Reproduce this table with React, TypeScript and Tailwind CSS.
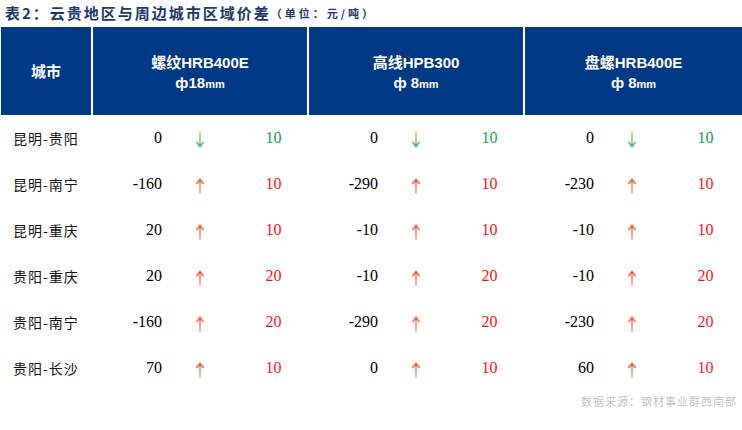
import React from 'react';

// Header groups
const groups = [
  { name: '螺纹HRB400E', spec: 'ф18' },
  { name: '高线HPB300', spec: 'ф 8' },
  { name: '盘螺HRB400E', spec: 'ф 8' },
];

type Cell = { price: string; up: boolean; delta: number };

const rows: { city: string; cells: Cell[] }[] = [
  {
    city: '昆明-贵阳',
    cells: [
      { price: '0', up: false, delta: 10 },
      { price: '0', up: false, delta: 10 },
      { price: '0', up: false, delta: 10 },
    ],
  },
  {
    city: '昆明-南宁',
    cells: [
      { price: '-160', up: true, delta: 10 },
      { price: '-290', up: true, delta: 10 },
      { price: '-230', up: true, delta: 10 },
    ],
  },
  {
    city: '昆明-重庆',
    cells: [
      { price: '20', up: true, delta: 10 },
      { price: '-10', up: true, delta: 10 },
      { price: '-10', up: true, delta: 10 },
    ],
  },
  {
    city: '贵阳-重庆',
    cells: [
      { price: '20', up: true, delta: 20 },
      { price: '-10', up: true, delta: 20 },
      { price: '-10', up: true, delta: 20 },
    ],
  },
  {
    city: '贵阳-南宁',
    cells: [
      { price: '-160', up: true, delta: 20 },
      { price: '-290', up: true, delta: 20 },
      { price: '-230', up: true, delta: 20 },
    ],
  },
  {
    city: '贵阳-长沙',
    cells: [
      { price: '70', up: true, delta: 10 },
      { price: '0', up: true, delta: 10 },
      { price: '60', up: true, delta: 10 },
    ],
  },
];

const cjk = "font-['Noto_Sans_CJK_SC',sans-serif]";
const serif = "font-['Liberation_Serif','Noto_Sans_CJK_SC',serif]";

// Gradient arrow, drawn rather than typed so the fill can fade like the source
function Arrow({ up }: { up: boolean }) {
  const id = up ? 'arrow-up' : 'arrow-down';
  return (
    <svg width="10" height="18" viewBox="0 0 10 18" className="mt-[3px]">
      <defs>
        <linearGradient id={id} x1="0" y1="0" x2="0" y2="18" gradientUnits="userSpaceOnUse">
          {up ? (
            <>
              <stop offset="0" stopColor="#ff4a00" />
              <stop offset="1" stopColor="#ff9ab8" />
            </>
          ) : (
            <>
              <stop offset="0" stopColor="#d8d040" />
              <stop offset="1" stopColor="#1aae7e" />
            </>
          )}
        </linearGradient>
      </defs>
      {up ? (
        <path d="M5 2.5V17M1.5 7L5 2.5L8.5 7" fill="none" stroke={`url(#${id})`} strokeWidth="1.4" />
      ) : (
        <path d="M5 1V15.5M1.5 11L5 15.5L8.5 11" fill="none" stroke={`url(#${id})`} strokeWidth="1.4" />
      )}
    </svg>
  );
}

export default function App() {
  return (
    <div className="w-[742px] h-[430px] bg-white overflow-hidden">
      {/* Title */}
      <div className={`h-[27px] pl-[5px] flex items-center text-[#1b3a6b] font-bold ${cjk}`}>
        <span className="text-[15px] tracking-[2px]">表2：云贵地区与周边城市区域价差</span>
        <span className="text-[11px] tracking-[3px]">（单位：元/吨）</span>
      </div>

      {/* Header */}
      <div className="flex gap-[2px] pl-px h-[88px]">
        <div className={`w-[90px] bg-[#003985] flex items-center justify-center text-white font-bold text-[15px] ${cjk}`}>
          城市
        </div>
        {groups.map((g, i) => (
          <div
            key={g.name}
            className={`${i === 2 ? 'flex-1' : 'w-[214px]'} bg-[#003985] flex flex-col items-center justify-center text-white font-bold leading-[20px] pt-[4px]`}
          >
            <span className="text-[15px] font-['Liberation_Sans','Noto_Sans_CJK_SC',sans-serif]">{g.name}</span>
            <span className="text-[15px] font-['Liberation_Sans',sans-serif]">
              {g.spec}
              <span className="text-[11px]">mm</span>
            </span>
          </div>
        ))}
      </div>

      {/* Rows */}
      <div>
        {rows.map((r) => (
          <div key={r.city} className="flex h-[46px] items-center">
            <div className={`w-[93px] pl-[13px] text-[14px] tracking-[1px] text-[#111] ${cjk}`}>{r.city}</div>
            {r.cells.map((c, i) => (
              <div key={i} className={`w-[216px] flex items-center text-[16px] ${serif}`}>
                <span className="w-[69px] text-right text-black">{c.price}</span>
                <span className="w-[76px] flex justify-center">
                  <Arrow up={c.up} />
                </span>
                <span className={`w-[71px] text-center ${c.up ? 'text-[#ff1010]' : 'text-[#18a050]'}`}>
                  {c.delta}
                </span>
              </div>
            ))}
          </div>
        ))}
      </div>

      {/* Footer */}
      <div className={`mt-[2px] pr-[5px] text-right text-[11px] tracking-[1px] text-[#c4c4c4] ${cjk}`}>
        数据来源：钢材事业群西南部
      </div>
    </div>
  );
}
